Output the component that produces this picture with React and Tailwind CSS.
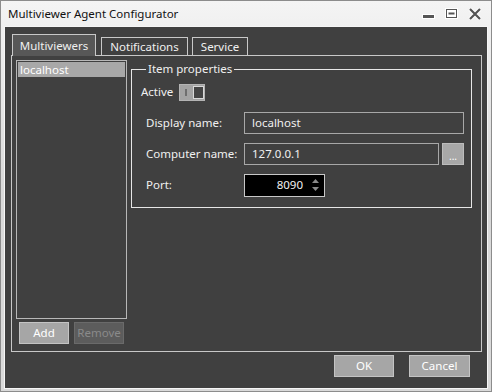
import React from 'react';

function TitleButtons() {
  return (
    <div className="flex items-center gap-[10px] mr-[9px] mt-[1px]">
      <svg width="13" height="12" viewBox="0 0 13 12">
        <rect x="0.5" y="6.5" width="12" height="4" fill="#555" stroke="#fff" />
      </svg>
      <svg width="13" height="12" viewBox="0 0 13 12">
        <rect x="0.5" y="0.5" width="12" height="10" fill="#fff" stroke="#fff" />
        <rect x="1.5" y="1.5" width="10" height="8" fill="none" stroke="#555" />
        <rect x="3.5" y="4.5" width="6" height="2" fill="#555" />
      </svg>
      <svg width="14" height="12" viewBox="0 0 14 12">
        <path d="M2 1 L12 11 M12 1 L2 11" stroke="#fff" strokeWidth="4" />
        <path d="M2 1 L12 11 M12 1 L2 11" stroke="#555" strokeWidth="2.2" />
      </svg>
    </div>
  );
}

function Button({ children, disabled, className = '' }) {
  return (
    <div
      className={
        'h-[22px] flex items-center justify-center border ' +
        (disabled
          ? 'bg-[#5c5c5c] border-[#6a6a6a] text-[#8a8a8a] '
          : 'bg-[#a6a6a6] border-[#c4c4c4] text-white ') +
        className
      }
    >
      {children}
    </div>
  );
}

function Field({ label, children }) {
  return (
    <div className="flex items-center h-[22px]">
      <div className="w-[103px] pl-[5px] whitespace-nowrap">{label}</div>
      {children}
    </div>
  );
}

export default function App() {
  return (
    <div
      className="w-[492px] h-[392px] flex flex-col border border-[#8c8c8c] bg-gradient-to-b from-[#f4f4f4] via-[#d8d8d8] to-[#dadada] text-[11.5px] text-[#f0f0f0]"
      style={{ fontFamily: '"Noto Sans", "Open Sans", sans-serif' }}
    >
      <div className="h-[25px] flex items-center justify-between pl-[7px] text-[#111]">
        <span className="text-[11.5px]">Multiviewer Agent Configurator</span>
        <TitleButtons />
      </div>

      <div className="flex-1 mx-[3px] mb-[2px] border border-[#f6f6f6] bg-[#404040] flex flex-col pt-[7px] pl-[6px] pr-[5px]">
        <div className="flex items-end h-[21px] pl-[1px]">
          <div className="relative z-10 h-[22px] w-[84px] -mb-[1px] bg-[#575757] border border-b-0 border-[#c8c8c8] flex items-center justify-center">
            Multiviewers
          </div>
          <div className="h-[18px] w-[87px] ml-[5px] border border-b-0 border-[#c8c8c8] flex items-center justify-center">
            Notifications
          </div>
          <div className="h-[18px] w-[56px] ml-[4px] border border-b-0 border-[#c8c8c8] flex items-center justify-center">
            Service
          </div>
        </div>

        <div className="h-[297px] border border-[#c8c8c8] flex pt-[4px] pl-[4px] pb-[7px] pr-[9px]">
          <div className="w-[111px] flex flex-col">
            <div className="h-[259px] border border-[#b8b8b8] p-[1px]">
              <div className="h-[15px] bg-[#a8a8a8] text-white flex items-center pl-[2px]">localhost</div>
            </div>
            <div className="flex mt-[3px] pl-[3px] gap-[5px]">
              <Button className="w-[50px]">Add</Button>
              <Button disabled className="w-[50px]">Remove</Button>
            </div>
          </div>

          <fieldset className="ml-[4px] flex-1 self-start border border-[#e6e6e6] pl-[9px] pr-[7px] mt-[1px] h-[147px]">
            <legend className="ml-[5px] px-[2px] leading-[16px]">Item properties</legend>
            <div className="flex items-center mt-[6px] h-[18px]">
              <span>Active</span>
              <div className="ml-[6px] w-[26px] h-[17px] bg-[#a3a3a3] border border-[#b4b4b4] flex items-center">
                <div className="ml-[5px] w-[2px] h-[7px] bg-[#6e6e6e]" />
                <div className="ml-[6px] w-[11px] h-[13px] border border-[#d8d8d8] bg-[#444]" />
              </div>
            </div>
            <div className="flex flex-col gap-[9px] mt-[11px]">
              <Field label="Display name:">
                <div className="flex-1 h-[22px] border border-[#a8a8a8] flex items-center pl-[7px]">localhost</div>
              </Field>
              <Field label="Computer name:">
                <div className="flex-1 h-[22px] border border-[#a8a8a8] flex items-center pl-[7px]">127.0.0.1</div>
                <div className="ml-[3px] w-[22px] h-[22px] bg-[#a8a8a8] border border-[#bcbcbc] flex items-end justify-center pb-[3px] text-[10px] leading-none text-white">...</div>
              </Field>
              <Field label="Port:">
                <div className="w-[81px] h-[23px] bg-black border border-[#c8c8c8] flex items-center justify-end pr-[5px]">
                  <span className="mr-[9px]">8090</span>
                  <svg width="7" height="12" viewBox="0 0 7 12">
                    <path d="M0 4 L3.5 0 L7 4 Z" fill="#8a8a8a" />
                    <path d="M0 8 L3.5 12 L7 8 Z" fill="#8a8a8a" />
                  </svg>
                </div>
              </Field>
            </div>
          </fieldset>
        </div>

        <div className="flex justify-end mt-[3px] pr-[12px] gap-[15px]">
          <Button className="w-[60px]">OK</Button>
          <Button className="w-[61px]">Cancel</Button>
        </div>
      </div>
    </div>
  );
}
